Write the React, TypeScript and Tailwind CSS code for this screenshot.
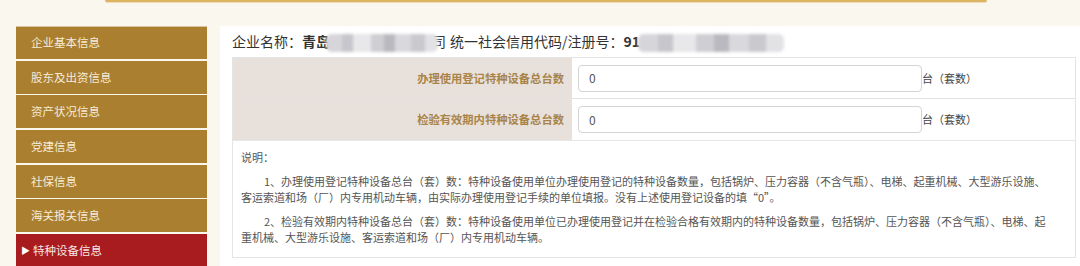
import React from "react";

const font = { fontFamily: '"Noto Sans CJK SC", "Noto Sans", sans-serif' };

const navItems = [
  "企业基本信息",
  "股东及出资信息",
  "资产状况信息",
  "党建信息",
  "社保信息",
  "海关报关信息",
];

function Blur({ w }: { w: number }) {
  return (
    <span
      className="inline-flex h-[18px] items-center align-middle overflow-hidden rounded-[6px] blur-[1.5px] bg-[#e4e4e6]"
      style={{ width: w }}
    >
      <span className="h-full w-[14%] bg-[#d6d6da]" />
      <span className="h-full w-[10%] bg-[#c6c6cc]" />
      <span className="h-full w-[16%] bg-[#e8e8ea]" />
      <span className="h-full w-[12%] bg-[#cfcfd3]" />
      <span className="h-full w-[10%] bg-[#b9b9bf]" />
      <span className="h-full w-[14%] bg-[#d9d9dd]" />
      <span className="h-full w-[12%] bg-[#c9c9ce]" />
      <span className="h-full w-[12%] bg-[#e2e2e5]" />
    </span>
  );
}

function Row({ label, top }: { label: string; top?: boolean }) {
  return (
    <div
      className={`flex h-[41px] ${top ? "border-b border-[#e6e1dc]" : ""}`}
    >
      <div className="flex w-[339px] items-center justify-end bg-[#e8e1db] pr-[8px] text-[11.3px] font-bold text-[#a8844a]">
        {label}
      </div>
      <div className="flex flex-1 items-center pl-[6px]">
        <div className="flex h-[27px] w-[344px] items-center rounded-[4px] border border-[#d4d4d4] bg-white pl-[10px] text-[12px] text-[#555]">
          0
        </div>
        <span className="text-[11px] text-[#444]">台（套数）</span>
      </div>
    </div>
  );
}

export default function App() {
  return (
    <div
      className="flex h-[266px] w-[1080px] flex-col overflow-hidden bg-[#faf7ef]"
      style={font}
    >
      <div className="h-[26px] shrink-0 pl-[105px]">
        <div className="h-[2px] w-[882px] rounded-b-[2px] bg-[#dcb464] shadow-[0_1px_0_#f0dcb2]" />
      </div>
      <div className="flex flex-1 gap-[13px]">
        <div className="ml-[16px] flex w-[191px] flex-col gap-[1.7px]">
          {navItems.map((t, i) => (
            <div
              key={t}
              className={`flex h-[33px] items-center bg-[#aa7f2f] pl-[15px] text-[11.5px] text-[#f6ecd9] ${
                i === 0 ? "border-t border-[#d9c49c]" : ""
              }`}
            >
              {t}
            </div>
          ))}
          <div className="flex h-[33px] items-center bg-[#a81b1e] pl-[5px] text-[11.5px] text-[#f7e6e6]">
            <span className="mr-[3px] text-[9px] text-white">▶</span>
            特种设备信息
          </div>
        </div>
        <div className="flex-1 bg-white pl-[12px]">
          <div className="flex h-[31px] items-center text-[14px] text-[#333]">
            <span>企业名称：</span>
            <span className="font-bold">青岛</span>
            <span className="-ml-[4px] mr-[-6px]">
              <Blur w={112} />
            </span>
            <span>司</span>
            <span className="ml-[4px]">统一社会信用代码/注册号：</span>
            <span className="font-bold">91</span>
            <span className="-ml-[2px]">
              <Blur w={146} />
            </span>
          </div>
          <div className="w-[844px] border border-[#e4e4e4]">
            <Row label="办理使用登记特种设备总台数" top />
            <Row label="检验有效期内特种设备总台数" />
            <div className="border-t border-[#e6e6e6] px-[8px] pt-[8px] pb-[12px] text-[11px] leading-[16px] text-[#555]">
              <div>说明：</div>
              <div className="mt-[8px]">
                <div className="pl-[23px]">
                  1、办理使用登记特种设备总台（套）数：特种设备使用单位办理使用登记的特种设备数量，包括锅炉、压力容器（不含气瓶）、电梯、起重机械、大型游乐设施、
                </div>
                <div>
                  客运索道和场（厂）内专用机动车辆，由实际办理使用登记手续的单位填报。没有上述使用登记设备的填“0”。
                </div>
              </div>
              <div className="mt-[8px]">
                <div className="pl-[23px] whitespace-nowrap">
                  2、检验有效期内特种设备总台（套）数：特种设备使用单位已办理使用登记并在检验合格有效期内的特种设备数量，包括锅炉、压力容器（不含气瓶）、电梯、起
                </div>
                <div>重机械、大型游乐设施、客运索道和场（厂）内专用机动车辆。</div>
              </div>
            </div>
          </div>
        </div>
      </div>
    </div>
  );
}
